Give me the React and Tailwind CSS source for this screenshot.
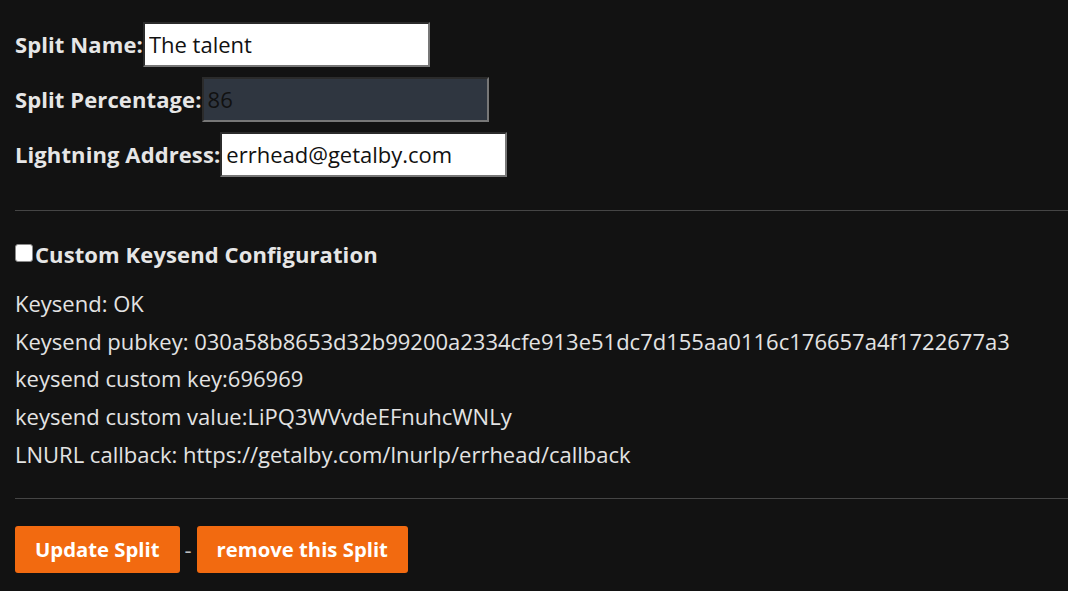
import React, { useState } from 'react';

const inputBase =
  "h-[45px] w-[287px] border-2 border-[#777] border-t-[#2b2b2b] border-l-[#2b2b2b] pl-[4px] pr-[3px] pb-[2px] text-[22px] text-[#111] outline-none font-['Open_Sans',sans-serif]";

function Field({ label, value, dark }) {
  return (
    <div className="flex items-center h-[45px]">
      <span className="font-bold text-[22px] text-[#e6e6e6] tracking-[0.1px]">{label}</span>
      <input
        className={inputBase + (dark ? ' bg-[#2f3640]' : ' bg-white')}
        defaultValue={value}
        readOnly={dark}
      />
    </div>
  );
}

export default function App() {
  const [custom, setCustom] = useState(false);

  const info = [
    'Keysend: OK',
    'Keysend pubkey: 030a58b8653d32b99200a2334cfe913e51dc7d155aa0116c176657a4f1722677a3',
    'keysend custom key:696969',
    'keysend custom value:LiPQ3WVvdeEFnuhcWNLy',
    'LNURL callback: https://getalby.com/lnurlp/errhead/callback',
  ];

  return (
    <div className="min-h-screen bg-[#121212] text-[#e3e3e3] font-['Open_Sans',sans-serif] pl-[15px] pt-[22px]">
      {/* Split fields */}
      <div className="flex flex-col gap-[10px]">
        <Field label="Split Name:" value="The talent" />
        <Field label="Split Percentage:" value="86" dark />
        <Field label="Lightning Address:" value="errhead@getalby.com" />
      </div>

      <hr className="mt-[33px] border-0 border-t border-[#454545]" />

      {/* Keysend config */}
      <label className="mt-[28px] flex items-center h-[30px] cursor-pointer">
        <input
          type="checkbox"
          checked={custom}
          onChange={(e) => setCustom(e.target.checked)}
          className="appearance-none w-[18px] h-[18px] mt-[-3px] rounded-[3px] bg-white border border-[#8a8a8a] checked:bg-blue-600"
        />
        <span className="ml-[2px] font-bold text-[22px] text-[#e6e6e6] tracking-[0.1px]">
          Custom Keysend Configuration
        </span>
      </label>

      <div className="mt-[16px] flex flex-col text-[22px] leading-[37.7px]">
        {info.map((line) => (
          <div key={line} className="whitespace-nowrap">{line}</div>
        ))}
      </div>

      <hr className="mt-[24px] border-0 border-t border-[#454545]" />

      {/* Actions */}
      <div className="mt-[27px] flex items-center">
        <button className="h-[47px] px-[20px] rounded-[3px] bg-[#f26a10] text-white font-bold text-[20.3px]">
          Update Split
        </button>
        <span className="mx-[5px] text-[#bdbdbd] text-[22px]">-</span>
        <button className="h-[47px] px-[20px] rounded-[3px] bg-[#f26a10] text-white font-bold text-[20.3px]">
          remove this Split
        </button>
      </div>
    </div>
  );
}
